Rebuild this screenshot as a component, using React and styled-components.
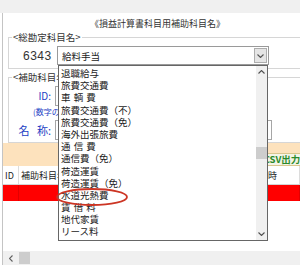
import React from "react";
import styled, { createGlobalStyle } from "styled-components";

const GlobalStyle = createGlobalStyle`
  html, body { margin: 0; padding: 0; background: #fff; }
  body { width: 300px; height: 265px; overflow: hidden; }
  #root { width: 300px; height: 265px; }
`;

const jp = `"Noto Sans CJK JP", "Noto Sans", sans-serif`;
const BLUE = "#2340c4";

const Screen = styled.div`
  position: relative;
  width: 300px;
  height: 265px;
  overflow: hidden;
  display: flex;
  flex-direction: column;
  font-family: ${jp};
  color: #1a1a1a;
  background: #fff;
`;

const TopStrip = styled.div`
  height: 13px;
  flex: none;
  background: #f0f0f0;
`;

const Window = styled.div`
  flex: 1;
  width: 309px;
  margin-left: 2px;
  border-left: 1px solid #c4c4c4;
  display: flex;
  flex-direction: column;
  background: #fff;
`;

const Title = styled.div`
  flex: none;
  height: 12px;
  padding-top: 5px;
  line-height: 12px;
  font-size: 9px;
  color: #333;
  text-align: center;
`;

const Group = styled.fieldset`
  flex: none;
  margin: ${(p) => p.$top}px 0 0 5px;
  padding: 0 0 ${(p) => p.$bottom}px 0;
  border: 1px solid #d6d6d6;
  min-width: 0;
`;

const Legend = styled.legend`
  margin-left: 3px;
  padding: 0 1px;
  font-size: 9.5px;
  line-height: 10px;
  color: #333;
`;

const Row = styled.div`
  display: flex;
  align-items: center;
  margin-top: ${(p) => p.$top || 0}px;
  height: ${(p) => p.$h}px;
`;

const Code = styled.span`
  flex: none;
  width: 48px;
  padding-left: 14px;
  box-sizing: border-box;
  font-family: "Liberation Sans", Arial, sans-serif;
  font-size: 12px;
  letter-spacing: 0.5px;
  color: #333;
`;

const Combo = styled.div`
  flex: none;
  width: 212px;
  height: 19px;
  box-sizing: border-box;
  border: 1px solid #9a9a9a;
  display: flex;
  align-items: center;
  background: #fff;
`;

const ComboValue = styled.span`
  flex: 1;
  padding-left: 4px;
  font-size: 9.5px;
  line-height: 12px;
`;

const DropButton = styled.span`
  width: 13px;
  height: 15px;
  margin-right: 1px;
  box-sizing: border-box;
  background: #e5e5e5;
  border: 1px solid #adadad;
  display: flex;
  align-items: center;
  justify-content: center;
`;

const FieldLabel = styled.span`
  flex: none;
  width: 42px;
  margin-right: 4px;
  text-align: right;
  color: ${BLUE};
  font-size: ${(p) => p.$size}px;
  word-spacing: ${(p) => p.$ws || 0}px;
  line-height: 12px;
  white-space: pre;
`;

const Input = styled.div`
  flex: none;
  width: ${(p) => p.$w}px;
  height: 20px;
  box-sizing: border-box;
  border: 1px solid #a6a6a6;
  background: #fff;
`;

const Hint = styled.span`
  padding-left: 24px;
  font-size: 8px;
  line-height: 10px;
  color: ${BLUE};
`;

const Band = styled.div`
  flex: none;
  height: 23px;
  background: #fde2bd;
  display: flex;
  align-items: flex-end;
  justify-content: flex-end;
  padding-right: 6px;
`;

const CsvButton = styled.div`
  width: 48px;
  height: 13px;
  box-sizing: border-box;
  border: 1px solid #d9c68e;
  background: #f4f4e6;
  color: #2b8a2b;
  font-weight: 700;
  font-size: 9.5px;
  line-height: 11px;
  text-align: center;
  white-space: nowrap;
`;

const cols = "16px 100px 111px 70px 1fr";

const HeaderRow = styled.div`
  flex: none;
  height: 18px;
  border-bottom: 1px solid #d4d4d4;
  display: grid;
  grid-template-columns: ${cols};
  font-size: 9px;
  line-height: 20px;
  color: #222;
`;

const HeadCell = styled.div`
  padding-left: ${(p) => p.$pl || 2}px;
  border-right: 1px solid #dcdcdc;
  white-space: nowrap;
  overflow: hidden;
`;

const DataRow = styled.div`
  flex: none;
  height: 16px;
  display: grid;
  grid-template-columns: ${cols};
  background: #ff0000;
`;

const DataCell = styled.div`
  border-right: 1px solid #e20000;
`;

const Empty = styled.div`
  flex: 1;
`;

const HScroll = styled.div`
  flex: none;
  height: 14px;
  background: #f0f0f0;
  display: flex;
  align-items: center;
`;

const ArrowBox = styled.span`
  width: ${(p) => p.$w}px;
  height: ${(p) => p.$h}px;
  display: flex;
  align-items: center;
  justify-content: center;
  flex: none;
`;

const HThumb = styled.span`
  width: 11px;
  height: 12px;
  background: #cdcdcd;
`;

const DropList = styled.div`
  position: absolute;
  left: 58px;
  top: 65px;
  width: 210px;
  height: 176px;
  box-sizing: border-box;
  border: 1px solid #666;
  background: #fff;
  display: flex;
`;

const Items = styled.ul`
  flex: 1;
  list-style: none;
  margin: 0;
  padding: 1px 0 0 0;
`;

const Item = styled.li`
  height: 12.2px;
  line-height: 12.2px;
  padding-left: 2px;
  font-size: 9.5px;
  white-space: pre;
  color: #1a1a1a;
  word-spacing: 1px;
`;

const VScroll = styled.div`
  width: 11px;
  background: #f0f0f0;
  display: flex;
  flex-direction: column;
`;

const Track = styled.div`
  flex: 1;
  padding-top: ${(p) => p.$offset}px;
`;

const VThumb = styled.div`
  height: 12px;
  background: #cdcdcd;
`;

const Mark = styled.svg`
  position: absolute;
  left: 55px;
  top: 187px;
  overflow: visible;
`;

const Chevron = ({ dir = "down", w = 7, h = 4, color = "#606060" }) => {
  const pts =
    dir === "down"
      ? `0.5,0.5 ${w / 2},${h - 0.5} ${w - 0.5},0.5`
      : dir === "up"
      ? `0.5,${h - 0.5} ${w / 2},0.5 ${w - 0.5},${h - 0.5}`
      : `${w - 0.5},0.5 0.5,${h / 2} ${w - 0.5},${h - 0.5}`;
  return (
    <svg width={w} height={h} viewBox={`0 0 ${w} ${h}`}>
      <polyline points={pts} fill="none" stroke={color} strokeWidth="1.1" />
    </svg>
  );
};

const items = [
  "退職給与",
  "旅費交通費",
  "車 輌 費",
  "旅費交通費（不）",
  "旅費交通費（免）",
  "海外出張旅費",
  "通 信 費",
  "通信費（免）",
  "荷造運賃",
  "荷造運賃（免）",
  "水道光熱費",
  "賃 借 料",
  "地代家賃",
  "リース料",
];

export default function App() {
  return (
    <>
      <GlobalStyle />
      <Screen>
        <TopStrip />
        <Window>
          <Title>《損益計算書科目用補助科目名》</Title>

          <Group $top={2} $bottom={3}>
            <Legend>&lt;総勘定科目名&gt;</Legend>
            <Row $top={4} $h={19}>
              <Code>6343</Code>
              <Combo>
                <ComboValue>給料手当</ComboValue>
                <DropButton>
                  <Chevron dir="down" w={7} h={4} color="#555" />
                </DropButton>
              </Combo>
            </Row>
          </Group>

          <Group $top={3} $bottom={2}>
            <Legend>&lt;補助科目名&gt;</Legend>
            <Row $top={4} $h={20}>
              <FieldLabel $size={10}>ID:</FieldLabel>
              <Input $w={120} />
            </Row>
            <Row $h={12}>
              <Hint>(数字のみ入力)</Hint>
            </Row>
            <Row $top={2} $h={20}>
              <FieldLabel $size={11} $ws={5}>名 称:</FieldLabel>
              <Input $w={217} />
            </Row>
          </Group>

          <Band>
            <CsvButton>CSV出力</CsvButton>
          </Band>

          <HeaderRow>
            <HeadCell>ID</HeadCell>
            <HeadCell>補助科目名</HeadCell>
            <HeadCell>区分</HeadCell>
            <HeadCell $pl={11}>更新日時</HeadCell>
            <HeadCell />
          </HeaderRow>
          <DataRow>
            <DataCell />
            <DataCell />
            <DataCell />
            <DataCell />
            <DataCell />
          </DataRow>
          <Empty />
          <HScroll>
            <ArrowBox $w={16} $h={14}>
              <Chevron dir="left" w={4} h={7} color="#606060" />
            </ArrowBox>
            <HThumb />
          </HScroll>
        </Window>

        <DropList>
          <Items>
            {items.map((t) => (
              <Item key={t}>{t}</Item>
            ))}
          </Items>
          <VScroll>
            <ArrowBox $w={11} $h={12}>
              <Chevron dir="up" w={7} h={4} color="#505050" />
            </ArrowBox>
            <Track $offset={69}>
              <VThumb />
            </Track>
            <ArrowBox $w={11} $h={12}>
              <Chevron dir="down" w={7} h={4} color="#505050" />
            </ArrowBox>
          </VScroll>
        </DropList>

        <Mark width="75" height="21" viewBox="0 0 75 21">
          <ellipse cx="37" cy="10" rx="35" ry="8" fill="none" stroke="#cc3524" strokeWidth="1.8" />
        </Mark>
      </Screen>
    </>
  );
}
